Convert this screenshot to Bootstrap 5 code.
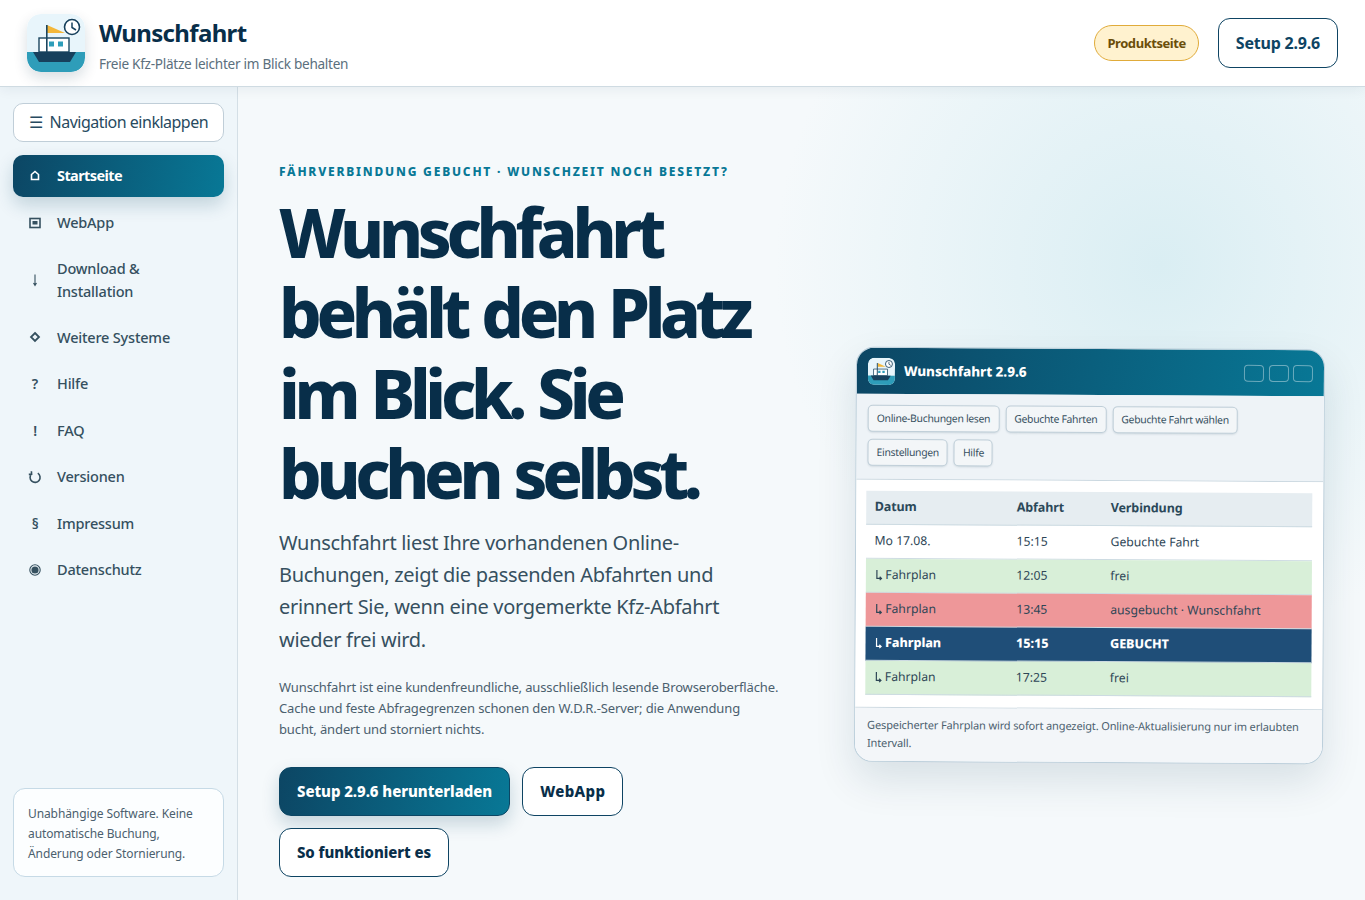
<!DOCTYPE html>
<html lang="de">
<head>
  <meta charset="UTF-8" />
  <title>Wunschfahrt</title>
  <link href="https://cdn.jsdelivr.net/npm/bootstrap@5.3.3/dist/css/bootstrap.min.css" rel="stylesheet">
  <style>
    html, body { height: 900px; overflow: hidden; }
    body { font-family: "Noto Sans", sans-serif; color: #0b2f4a; background: #f5f9fb; }
    .top-bar { position: relative; z-index: 2; height: 87px; background: #fff; border-bottom: 1px solid #cfdbe2; padding: 0 27px; box-shadow: 0 2px 12px rgba(11,47,74,.07); }
    .app-logo { width: 58px; height: 58px; border-radius: 14px; box-shadow: 0 6px 14px rgba(11,47,74,.16); display: block; margin-right: 14px; }
    .brand-block { margin-top: 4px; }
    .brand-name { font-size: 24px; font-weight: 700; line-height: 30px; letter-spacing: -.65px; color: #082e49; position: relative; top: 1px; }
    .brand-sub { font-size: 13.6px; line-height: 20px; color: #5b6f7d; margin-top: 7px; letter-spacing: -.28px; }
    .pill-product { font-size: 13px; font-weight: 700; letter-spacing: -.45px; color: #6b4e0a; background: #fff2cf; border: 1px solid #e0ab3a; border-radius: 18px; height: 36px; padding: 0 12px; line-height: 34px; margin-right: 19px; }
    .btn-setup { font-size: 16px; font-weight: 700; letter-spacing: -.2px; color: #0e4463; background: #fff; border: 1px solid #0e4463; border-radius: 12px; height: 50px; padding: 0 17px; line-height: 48px; }
    .page-shell { height: 813px; }
    .side-nav { width: 238px; flex: none; background: #eff6fa; border-right: 1px solid #d4dfe6; padding: 16px 13px 23px; }
    .btn-collapse { width: 211px; height: 39px; border: 1px solid #c0ced8; border-radius: 10px; background: #fff; color: #274a60; font-size: 16px; letter-spacing: -.5px; padding: 0 0 2px 15px; text-align: left; margin-bottom: 13px; display: flex; align-items: center; gap: 7px; }
    .nav-row { display: flex; align-items: center; padding: 0 0 0 16px; font-size: 14.5px; font-weight: 500; letter-spacing: -.2px; color: #35505f; line-height: 23px; min-height: 42px; margin-bottom: 4.5px; border-radius: 10px; text-decoration: none; }
    .nav-row.is-tall { min-height: 63.5px; }
    .nav-row .nav-ico { width: 12px; flex: none; margin-right: 16px; text-align: center; font-size: 14px; font-weight: 600; display: flex; justify-content: center; }
    .nav-ico svg { width: 14px; height: 14px; display: block; fill: none; stroke: currentColor; stroke-width: 1.6; flex: none; }
    .nav-row.is-active { background: linear-gradient(100deg, #0c4664, #087896); color: #fff; font-weight: 700; box-shadow: 0 8px 18px rgba(11,71,100,.2); letter-spacing: -.6px; padding-bottom: 2px; }
    .note-box { width: 211px; height: 89px; border: 1px solid #c6dae6; border-radius: 12px; background: #fcfeff; font-size: 12px; letter-spacing: -.1px; line-height: 20px; color: #4b606e; padding: 15px 14px; }
    .main-area { flex: 1; min-width: 0; padding: 76px 40px 0 41px; background: radial-gradient(circle 385px at 922px 178px, #daeef3 0, rgba(218,238,243,0) 100%), #f5f9fb; overflow: hidden; }
    .hero-text { width: 505px; flex: none; }
    .eyebrow { font-size: 12px; font-weight: 800; letter-spacing: 1.8px; color: #087896; line-height: 18px; margin-bottom: 11px; white-space: nowrap; }
    .hero-title { font-size: 67px; font-weight: 800; line-height: 80.4px; letter-spacing: -5.3px; word-spacing: 3px; color: #082e49; margin: 0 0 13px; }
    .hero-lead { font-size: 20px; letter-spacing: -.3px; line-height: 32.3px; color: #36505f; margin-bottom: 21px; }
    .hero-small { font-size: 13px; letter-spacing: -.13px; line-height: 21px; color: #4b606e; margin-bottom: 27px; white-space: nowrap; }
    .cta-wrap { display: flex; flex-wrap: wrap; gap: 12px; }
    .cta-primary, .cta-ghost { font-size: 15px; font-weight: 800; letter-spacing: -.1px; height: 49px; line-height: 47px; border-radius: 12px; padding: 0 17px; display: inline-block; }
    .cta-primary { color: #fff; background: linear-gradient(100deg, #0c4664, #087896); border: 1px solid #0c4664; box-shadow: 0 8px 18px rgba(11,71,100,.2); letter-spacing: -.06px; }
    .cta-ghost { color: #082e49; background: #fff; border: 1px solid #0e4463; }
    .cta-short { letter-spacing: .35px; }
    .fine-print { font-size: 13px; line-height: 21px; color: #4b606e; margin-top: 19px; white-space: nowrap; }
    .app-window { width: 469px; height: 415px; flex: none; margin: 185px 0 0 71px; border: 1px solid #bccfdb; border-radius: 18px; background: #fff; overflow: hidden; box-shadow: 0 18px 40px rgba(11,47,74,.12); transform: rotate(.3deg); }
    .win-title { height: 46px; background: linear-gradient(100deg, #0c4664, #087896); padding: 0 11px 0 11px; color: #fff; font-size: 13.5px; font-weight: 800; letter-spacing: -.05px; }
    .win-logo { width: 27px; height: 27px; border-radius: 6px; display: block; margin-right: 9px; }
    .win-ctl { width: 20px; height: 17px; border: 1px solid rgba(255,255,255,.4); border-radius: 4px; margin-left: 4.5px; }
    .win-tools { height: 86px; background: #eef3f7; border-bottom: 1px solid #cbd8e0; padding: 11px 11px 0; gap: 7px 6px; }
    .tool-btn { font-size: 10.4px; letter-spacing: -.3px; color: #37505f; height: 27px; line-height: 25px; padding: 0 8px; background: #f3f6f8; border: 1px solid #bfced8; border-radius: 5px; box-shadow: 0 1px 2px rgba(11,47,74,.12); white-space: nowrap; }
    .win-body { height: 228px; padding: 11px 10px 0; background: #fff; border-bottom: 1px solid #cbd8e0; }
    .sched-row { display: grid; grid-template-columns: 142px 94px 1fr; width: 446px; height: 34px; align-items: center; padding-left: 8.5px; font-size: 12.2px; color: #2e4656; border-bottom: 1px solid #cddbe2; white-space: nowrap; }
    .sched-head { background: #e6edf1; color: #2b4859; font-weight: 700; font-size: 12.5px; letter-spacing: -.1px; }
    .row-free { background: #d8efd8; }
    .row-full { background: #ee9799; }
    .row-booked { background: #1f4e78; color: #fff; font-weight: 800; letter-spacing: -.05px; font-size: 12.6px; }
    .sub-arrow { width: 8px; height: 12px; display: inline-block; vertical-align: -2px; margin-right: 3px; fill: none; stroke: currentColor; stroke-width: 1.2; }
    .win-foot { background: #f3f6f9; font-size: 11px; letter-spacing: -.13px; line-height: 17.5px; color: #4b606e; padding: 8px 12px; height: 53px; }
  </style>
</head>
<body>
  <header class="top-bar d-flex align-items-center">
    <svg class="app-logo" viewBox="0 0 58 58">
      <defs><clipPath id="logoClip"><rect width="58" height="58" rx="14"/></clipPath></defs>
      <g clip-path="url(#logoClip)">
        <rect width="58" height="58" fill="#e8f5fb"/>
        <rect y="38" width="58" height="20" fill="#2e9db9"/>
        <path d="M20 11 L38 19 L20 19 Z" fill="#f4b73a"/>
        <rect x="12" y="24" width="30" height="14" fill="#fff" stroke="#1b4660" stroke-width="1.4"/>
        <rect x="22" y="27.5" width="5" height="5" fill="#2e9db9"/>
        <rect x="31" y="27.5" width="5" height="5" fill="#2e9db9"/>
        <rect x="19" y="11" width="1.6" height="27" fill="#1b4660"/>
        <path d="M6 38 H49 L43 48 H12 Z" fill="#17405c"/>
        <circle cx="45" cy="13" r="7.5" fill="#fff" stroke="#17405c" stroke-width="1.6"/>
        <path d="M45 8.5 V13.5 L49 16" fill="none" stroke="#17405c" stroke-width="1.5"/>
      </g>
    </svg>
    <div class="brand-block">
      <div class="brand-name">Wunschfahrt</div>
      <div class="brand-sub">Freie Kfz-Plätze leichter im Blick behalten</div>
    </div>
    <span class="pill-product ms-auto">Produktseite</span>
    <button class="btn-setup">Setup 2.9.6</button>
  </header>

  <div class="page-shell d-flex">
    <!-- Sidebar -->
    <aside class="side-nav d-flex flex-column">
      <button class="btn-collapse"><span>☰</span><span>Navigation einklappen</span></button>
      <a class="nav-row is-active" href="#"><span class="nav-ico"><svg viewBox="0 0 14 14" stroke-width="1.2"><path d="M3.5 11.5 V6.5 L7 3.5 L10.5 6.5 V11.5 Z"/></svg></span>Startseite</a>
      <a class="nav-row" href="#"><span class="nav-ico"><svg viewBox="0 0 14 14"><rect x="2" y="2.5" width="10" height="9"/><rect x="4.5" y="5" width="5" height="3.5" fill="currentColor" stroke="none"/></svg></span>WebApp</a>
      <a class="nav-row is-tall" href="#"><span class="nav-ico"><svg viewBox="0 0 14 14"><path d="M7 1.5 V12 M5.5 10 L7 12.5 L8.5 10" stroke-width="1.1"/></svg></span><span>Download &amp;<br>Installation</span></a>
      <a class="nav-row" href="#"><span class="nav-ico"><svg viewBox="0 0 14 14"><path d="M7 3 L11 7 L7 11 L3 7 Z" stroke-width="1.8"/></svg></span>Weitere Systeme</a>
      <a class="nav-row" href="#"><span class="nav-ico">?</span>Hilfe</a>
      <a class="nav-row" href="#"><span class="nav-ico">!</span>FAQ</a>
      <a class="nav-row" href="#"><span class="nav-ico"><svg viewBox="0 0 14 14"><path d="M3.6 3.8 A5 5 0 1 0 9.8 3.2 M3.4 1.2 L3.6 4.2 L0.8 4.4"/></svg></span>Versionen</a>
      <a class="nav-row" href="#"><span class="nav-ico">§</span>Impressum</a>
      <a class="nav-row" href="#"><span class="nav-ico"><svg viewBox="0 0 14 14"><circle cx="7" cy="7" r="5.2" stroke-width="1.1"/><circle cx="7" cy="7" r="3.6" fill="currentColor" stroke="none"/></svg></span>Datenschutz</a>
      <div class="note-box mt-auto">Unabhängige Software. Keine automatische Buchung, Änderung oder Stornierung.</div>
    </aside>

    <!-- Hero -->
    <main class="main-area d-flex align-items-start">
      <div class="hero-text">
        <div class="eyebrow">FÄHRVERBINDUNG GEBUCHT · WUNSCHZEIT NOCH BESETZT?</div>
        <h1 class="hero-title">Wunschfahrt behält den Platz im Blick. Sie buchen selbst.</h1>
        <p class="hero-lead">Wunschfahrt liest Ihre vorhandenen Online-Buchungen, zeigt die passenden Abfahrten und erinnert Sie, wenn eine vorgemerkte Kfz-Abfahrt wieder frei wird.</p>
        <p class="hero-small">Wunschfahrt ist eine kundenfreundliche, ausschließlich lesende Browseroberfläche.<br>Cache und feste Abfragegrenzen schonen den W.D.R.-Server; die Anwendung<br>bucht, ändert und storniert nichts.</p>
        <div class="cta-wrap">
          <a class="cta-primary text-decoration-none" href="#">Setup 2.9.6 herunterladen</a>
          <a class="cta-ghost cta-short text-decoration-none" href="#">WebApp</a>
          <a class="cta-ghost text-decoration-none" href="#">So funktioniert es</a>
        </div>
        <div class="fine-print">Windows-Anwendung und WebApp greifen nur lesend auf Ihre Online-Buchungen zu.</div>
      </div>

      <div class="app-window">
        <div class="win-title d-flex align-items-center">
          <svg class="win-logo" viewBox="0 0 58 58">
            <rect width="58" height="58" rx="12" fill="#e8f5fb"/>
            <path d="M0 38 H58 V46 A12 12 0 0 1 46 58 H12 A12 12 0 0 1 0 46 Z" fill="#2e9db9"/>
            <path d="M21 11 L38 19 L21 19 Z" fill="#f4b73a"/>
            <rect x="12" y="24" width="30" height="14" fill="#fff" stroke="#1b4660" stroke-width="1.6"/>
            <rect x="22" y="27.5" width="5" height="5" fill="#2e9db9"/>
            <rect x="31" y="27.5" width="5" height="5" fill="#2e9db9"/>
            <rect x="19" y="11" width="2" height="27" fill="#1b4660"/>
            <path d="M6 38 H49 L43 48 H12 Z" fill="#17405c"/>
            <circle cx="45" cy="13" r="7.5" fill="#fff" stroke="#17405c" stroke-width="1.8"/>
            <path d="M45 8.5 V13.5 L49 16" fill="none" stroke="#17405c" stroke-width="1.6"/>
          </svg>
          <span>Wunschfahrt 2.9.6</span>
          <span class="win-ctl ms-auto"></span><span class="win-ctl"></span><span class="win-ctl"></span>
        </div>
        <div class="win-tools d-flex flex-wrap align-content-start">
          <span class="tool-btn">Online-Buchungen lesen</span>
          <span class="tool-btn">Gebuchte Fahrten</span>
          <span class="tool-btn">Gebuchte Fahrt wählen</span>
          <span class="tool-btn">Einstellungen</span>
          <span class="tool-btn">Hilfe</span>
        </div>
        <div class="win-body">
          <div class="sched-row sched-head"><span>Datum</span><span>Abfahrt</span><span>Verbindung</span></div>
          <div class="sched-row"><span>Mo 17.08.</span><span>15:15</span><span>Gebuchte Fahrt</span></div>
          <div class="sched-row row-free"><span><svg class="sub-arrow" viewBox="0 0 8 12"><path d="M2 1 V9.5 H6 M4.8 7.8 L6.6 9.5 L4.8 11.2"/></svg>Fahrplan</span><span>12:05</span><span>frei</span></div>
          <div class="sched-row row-full"><span><svg class="sub-arrow" viewBox="0 0 8 12"><path d="M2 1 V9.5 H6 M4.8 7.8 L6.6 9.5 L4.8 11.2"/></svg>Fahrplan</span><span>13:45</span><span>ausgebucht · Wunschfahrt</span></div>
          <div class="sched-row row-booked"><span><svg class="sub-arrow" viewBox="0 0 8 12"><path d="M2 1 V9.5 H6 M4.8 7.8 L6.6 9.5 L4.8 11.2"/></svg>Fahrplan</span><span>15:15</span><span>GEBUCHT</span></div>
          <div class="sched-row row-free"><span><svg class="sub-arrow" viewBox="0 0 8 12"><path d="M2 1 V9.5 H6 M4.8 7.8 L6.6 9.5 L4.8 11.2"/></svg>Fahrplan</span><span>17:25</span><span>frei</span></div>
        </div>
        <div class="win-foot">Gespeicherter Fahrplan wird sofort angezeigt. Online-Aktualisierung nur im erlaubten Intervall.</div>
      </div>
    </main>
  </div>
  <script src="https://cdn.jsdelivr.net/npm/bootstrap@5.3.3/dist/js/bootstrap.bundle.min.js"></script>
</body>
</html>
